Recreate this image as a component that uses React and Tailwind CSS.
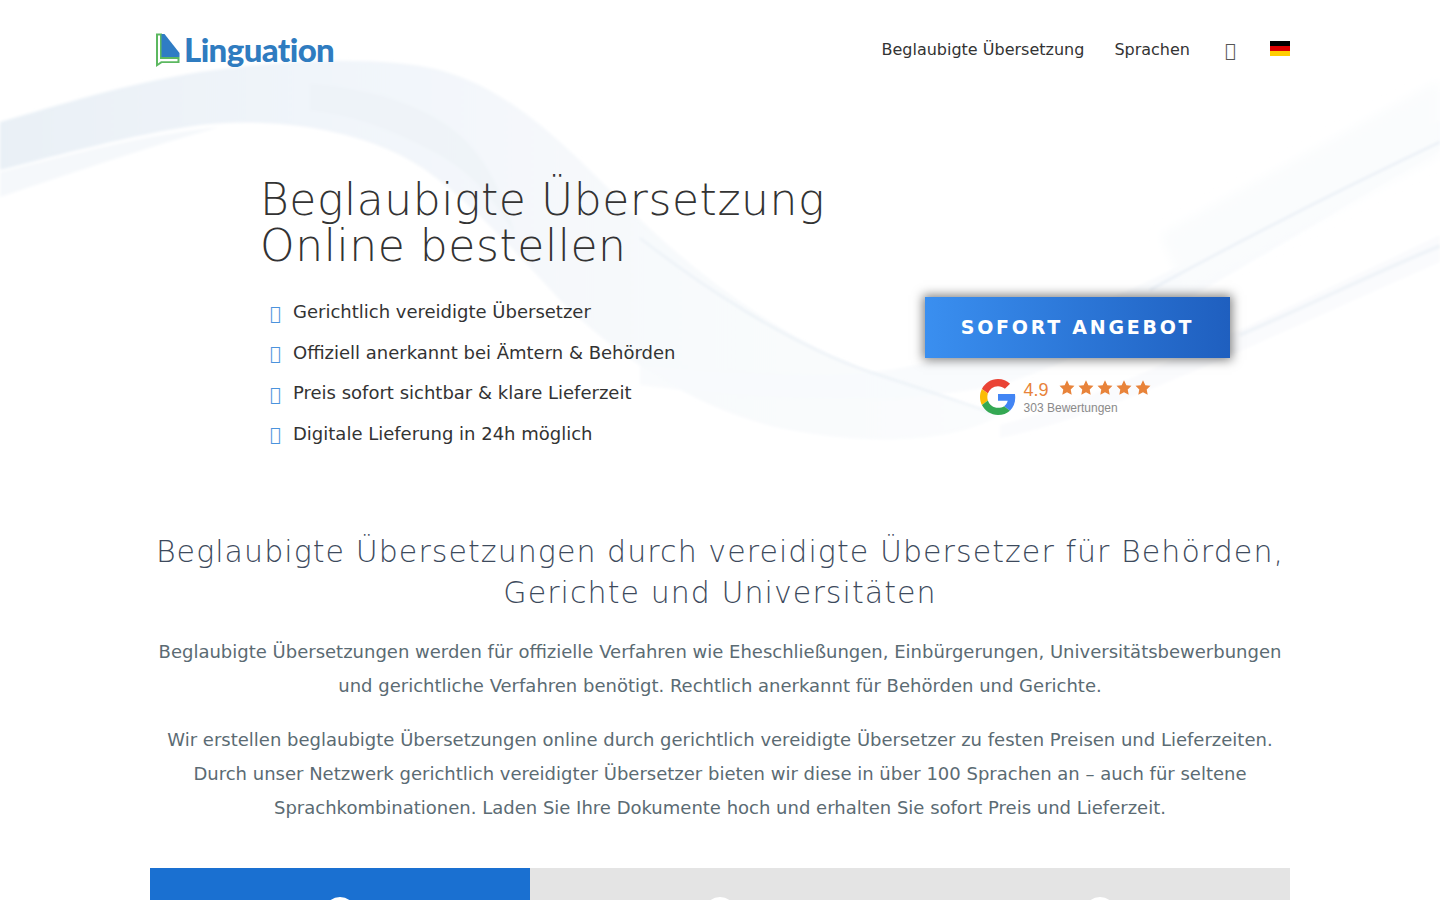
const font = { fontFamily: '"DejaVu Sans", sans-serif' };

function Logo() {
  return (
    <div className="flex items-center gap-[3px]">
      <svg width="26" height="36" viewBox="0 0 26 36">
        <path d="M1 1.5 H7 V25 H24.5 V31 H7 L1 35 Z" fill="#5cb860" />
        <path d="M3 3.5 H5 V27 H22.5 V29.3 H6 L3 31.5 Z" fill="#fff" />
        <path d="M6.5 2 H9.5 L24.5 21 V25 H6.5 Z" fill="#2f7cc4" />
      </svg>
      <span className="mb-0.5 text-[33px] font-black leading-none tracking-[-0.6px] text-[#2f7cc0]" style={{ fontFamily: 'Lato, sans-serif' }}>Linguation</span>
    </div>
  );
}

function Flag() {
  return (
    <div className="flex h-[15px] w-5 flex-col">
      <div className="h-[5px] bg-black" />
      <div className="h-[5px] bg-[#dd0000]" />
      <div className="h-[5px] bg-[#ffce00]" />
    </div>
  );
}

function Waves() {
  return (
    <svg className="absolute left-0 top-0 h-[470px] w-[1440px]" viewBox="0 0 1440 470" fill="none">
      <defs>
        <linearGradient id="a" x1="0" x2="1">
          <stop offset="0" stopColor="#e9f0f6" />
          <stop offset="0.35" stopColor="#f1f5fa" />
          <stop offset="0.7" stopColor="#f8fafc" />
          <stop offset="1" stopColor="#fafcfd" />
        </linearGradient>
        <filter id="b"><feGaussianBlur stdDeviation="1.5" /></filter>
        <filter id="c"><feGaussianBlur stdDeviation="6" /></filter>
      </defs>
      <g filter="url(#b)">
        <path d="M0 122 C60 105 120 85 200 72 C280 60 380 55 440 70 C510 90 560 140 620 200 C690 270 780 340 880 375 L1000 415 C950 445 860 445 780 428 C700 410 620 360 560 300 C500 235 450 180 400 155 C340 125 260 118 200 125 C130 135 60 155 0 170 Z" fill="url(#a)" />
        <path d="M0 172 C70 155 140 135 220 127 C170 140 80 170 0 197 Z" fill="#f5f8fb" />
        <path d="M310 84 C390 90 440 115 465 140 C490 165 505 200 515 235 C495 200 470 170 430 150 C390 128 350 115 310 110 Z" fill="#ecf2f7" opacity="0.6" />
        <path d="M640 365 C720 372 800 378 870 372 C950 365 1080 320 1230 240 L1440 120 L1440 150 C1300 230 1120 350 1000 385 C900 405 770 402 640 385 Z" fill="#f8fafc" opacity="0.8" />
      </g>
      <path d="M1000 425 C1080 405 1200 350 1440 235 L1440 262 C1240 350 1110 415 1000 438 Z" fill="#fafbfd" filter="url(#b)" />
      <path d="M1160 235 L1440 80 L1440 155 L1185 290 Z" fill="#fafcfd" filter="url(#c)" />
      <g filter="url(#b)">
        <path d="M640 238 C700 285 790 345 870 372 C920 388 960 402 990 412" stroke="#e6edf4" strokeWidth="1.5" />
        <path d="M1150 290 C1250 235 1350 185 1440 142" stroke="#e3eaf3" strokeWidth="1.5" />
        <path d="M1240 335 C1310 305 1380 270 1440 246" stroke="#edf2f7" strokeWidth="3" />
      </g>
    </svg>
  );
}

function GoogleG() {
  return (
    <svg width="36" height="36" viewBox="0 0 48 48">
      <path fill="#EA4335" d="M24 9.5c3.54 0 6.71 1.22 9.21 3.6l6.85-6.85C35.9 2.38 30.47 0 24 0 14.62 0 6.51 5.38 2.56 13.22l7.98 6.19C12.43 13.72 17.74 9.5 24 9.5z" />
      <path fill="#4285F4" d="M46.98 24.55c0-1.57-.15-3.09-.38-4.55H24v9.02h12.94c-.58 2.96-2.26 5.48-4.78 7.18l7.73 6c4.51-4.18 7.09-10.36 7.09-17.65z" />
      <path fill="#FBBC05" d="M10.53 28.59c-.48-1.45-.76-2.99-.76-4.59s.27-3.14.76-4.59l-7.98-6.19C.92 16.46 0 20.12 0 24c0 3.88.92 7.54 2.56 10.78l7.97-6.19z" />
      <path fill="#34A853" d="M24 48c6.48 0 11.93-2.13 15.89-5.81l-7.73-6c-2.15 1.45-4.92 2.3-8.16 2.3-6.26 0-11.57-4.22-13.47-9.91l-7.98 6.19C6.51 42.62 14.62 48 24 48z" />
    </svg>
  );
}

function Star() {
  return (
    <svg width="16" height="15" viewBox="0 0 24 23">
      <path d="M12 0.5 L15.6 8 L23.5 9 L17.7 14.5 L19.2 22.5 L12 18.6 L4.8 22.5 L6.3 14.5 L0.5 9 L8.4 8 Z" fill="#e8833a" />
    </svg>
  );
}

function Rating() {
  return (
    <div className="mt-[21px] flex items-start gap-[8px] pr-[24px]">
      <GoogleG />
      <div className="flex flex-col" style={{ fontFamily: '"Liberation Sans", sans-serif' }}>
        <div className="flex h-[21px] items-center gap-[10px]">
          <span className="text-[18px] leading-none text-[#e8833a]">4.9</span>
          <span className="mb-[4px] flex gap-[3.2px]"><Star /><Star /><Star /><Star /><Star /></span>
        </div>
        <span className="mt-[1px] text-[12px] leading-[14px] text-[#8a8a8a]">303 Bewertungen</span>
      </div>
    </div>
  );
}

function Tab({ active }) {
  return (
    <div className={"flex h-[32px] justify-center overflow-hidden pt-[29px] " + (active ? "bg-[#1a70d1]" : "bg-[#e4e4e4]")}>
      <div className="h-[32px] w-[32px] shrink-0 rounded-full border-[3px] border-white" />
    </div>
  );
}

const items = [
  "Gerichtlich vereidigte Übersetzer",
  "Offiziell anerkannt bei Ämtern & Behörden",
  "Preis sofort sichtbar & klare Lieferzeit",
  "Digitale Lieferung in 24h möglich",
];

export default function App() {
  return (
    <div className="h-[900px] overflow-hidden bg-white" style={font}>
      <section className="relative h-[470px]">
        <Waves />
        <div className="relative mx-auto w-[1140px]">
          <header className="flex h-[100px] items-start justify-between pl-[5px] pt-[32px]">
            <Logo />
            <nav className="-mt-[2px] flex items-center text-[16px] leading-[35px] text-[#333]">
              <span>Beglaubigte Übersetzung</span>
              <span className="ml-[30px]">Sprachen</span>
              <span className="ml-[35px] mt-[3px] w-[10px] text-[18px] text-[#555]">{"\uf00c"}</span>
              <span className="ml-[35px] -mt-[2px]"><Flag /></span>
            </nav>
          </header>
          <div className="flex justify-between pl-[110px] pr-[60px]">
            <div className="pt-[77px]">
              <h1 className="text-[44px] leading-[46px] tracking-[0.56px] text-[#333]" style={{ fontWeight: 200 }}>
                Beglaubigte Übersetzung<br />Online bestellen
              </h1>
              <ul className="mt-[22.4px] flex flex-col pl-[10px]">
                {items.map((t) => (
                  <li key={t} className="flex h-[40.6px] items-center text-[18px] text-[#333]">
                    <span className="mt-[3px] w-[23px] text-[#4a93dc]">{"\uf00c"}</span>
                    <span>{t}</span>
                  </li>
                ))}
              </ul>
            </div>
            <div className="flex w-[305px] flex-col items-center pt-[197px]">
              <div className="flex h-[61px] w-[305px] items-center justify-center bg-gradient-to-r from-[#3a8ff0] to-[#1f5fbf] text-[19px] font-bold tracking-[2.75px] text-white shadow-[0_0_10px_2px_rgba(0,0,0,0.5)]">
                SOFORT ANGEBOT
              </div>
              <Rating />
            </div>
          </div>
        </div>
      </section>
      <section className="mx-auto w-[1140px] pt-[61px] text-center">
        <h2 className="whitespace-nowrap text-[30px] leading-[41px] tracking-[1.07px] text-[#3d4a5c]" style={{ fontWeight: 200 }}>
          Beglaubigte Übersetzungen durch vereidigte Übersetzer für Behörden,<br />Gerichte und Universitäten
        </h2>
        <p className="mt-[22px] text-[18px] leading-[34px] text-[#5b6b73]">
          Beglaubigte Übersetzungen werden für offizielle Verfahren wie Eheschließungen, Einbürgerungen, Universitätsbewerbungen<br />
          und gerichtliche Verfahren benötigt. Rechtlich anerkannt für Behörden und Gerichte.
        </p>
        <p className="mt-[20px] text-[18px] leading-[34px] text-[#5b6b73]">
          Wir erstellen beglaubigte Übersetzungen online durch gerichtlich vereidigte Übersetzer zu festen Preisen und Lieferzeiten.<br />
          Durch unser Netzwerk gerichtlich vereidigter Übersetzer bieten wir diese in über 100 Sprachen an – auch für seltene<br />
          Sprachkombinationen. Laden Sie Ihre Dokumente hoch und erhalten Sie sofort Preis und Lieferzeit.
        </p>
        <div className="mt-[43px] grid grid-cols-3">
          <Tab active />
          <Tab />
          <Tab />
        </div>
      </section>
    </div>
  );
}
